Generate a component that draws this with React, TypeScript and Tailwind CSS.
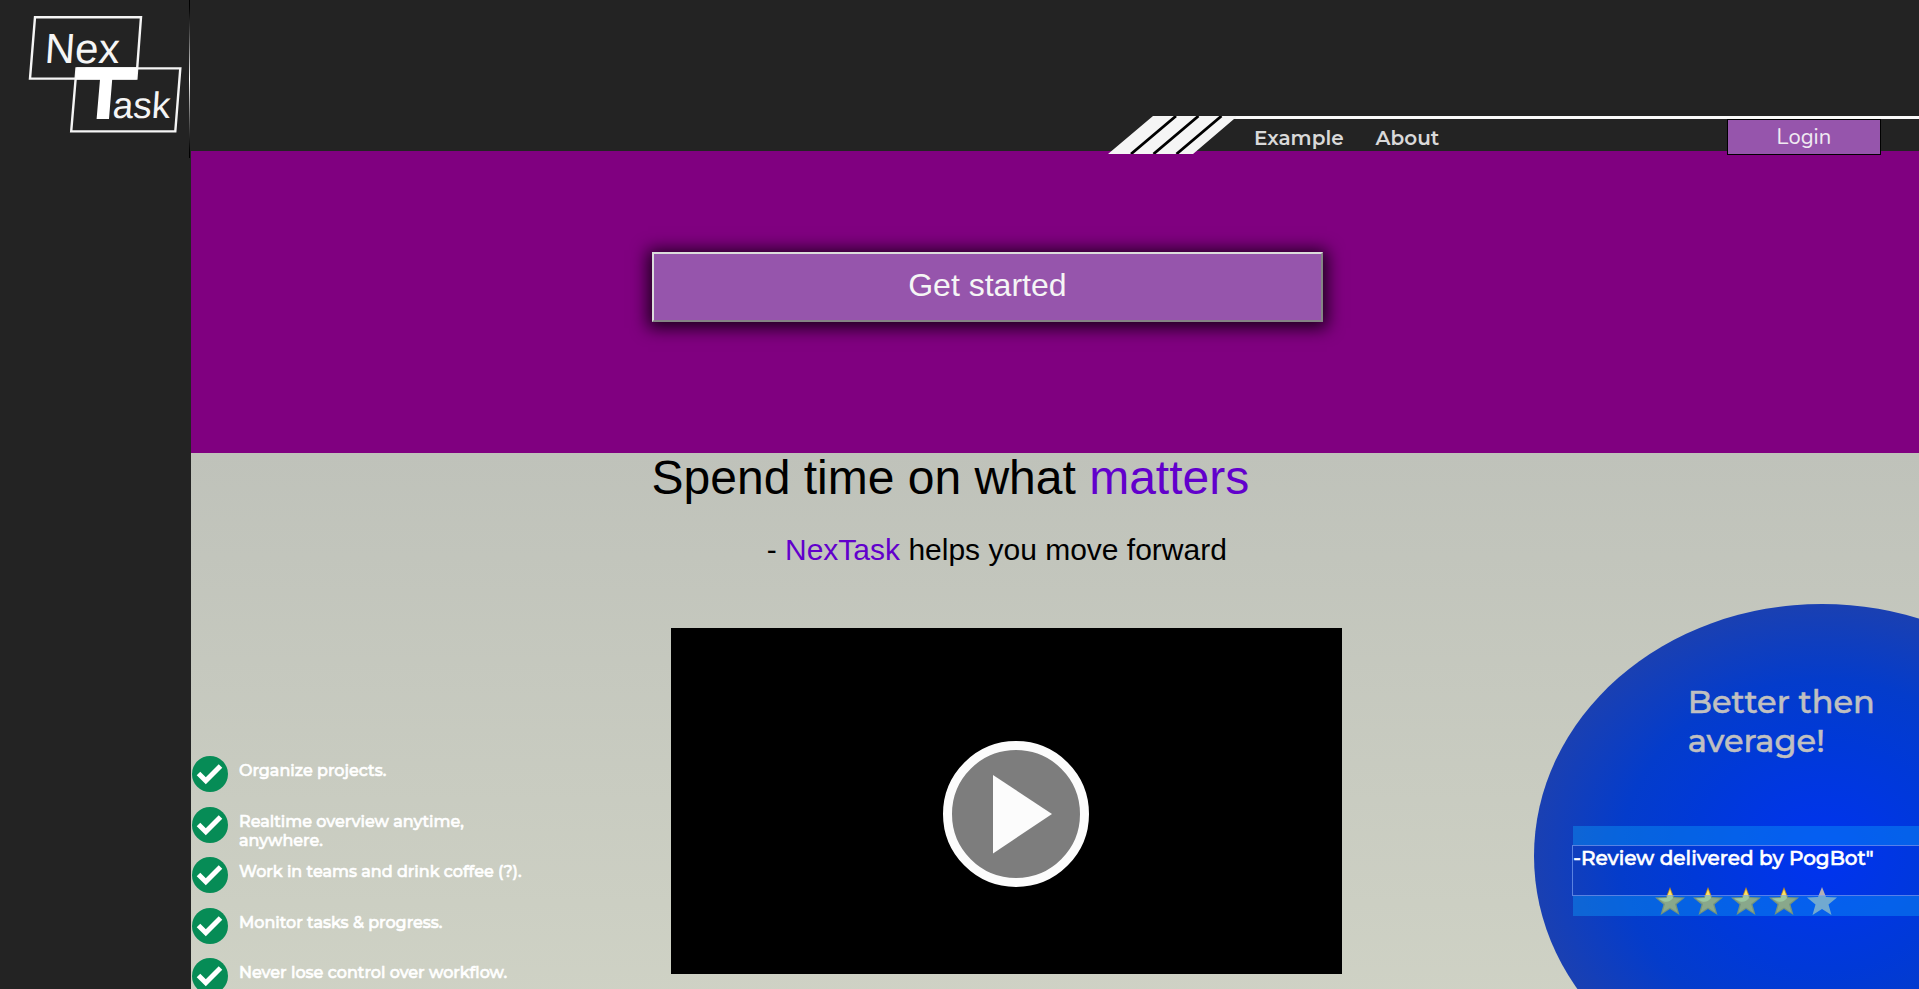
const features = [
  "Organize projects.",
  "Realtime overview anytime, anywhere.",
  "Work in teams and drink coffee (?).",
  "Monitor tasks & progress.",
  "Never lose control over workflow.",
];

const starPoints = "15,0 19,10 30,10.5 21.5,17.5 24.5,28 15,22 5.5,28 8.5,17.5 0,10.5 11,10";

function Logo() {
  return (
    <svg viewBox="0 0 184 136" className="block h-[136px] w-[184px]" role="img" aria-label="NexTask">
      <g fill="none" stroke="#f5f5f5" strokeWidth="2.4">
        <path d="M35 17.2H141L136.4 78.6H30Z" />
        <path d="M76.5 68.4H180.3L175.3 131.4H71.2Z" />
      </g>
      <path d="M76.5 67.2H137.6L136.6 79.4H112.2L109 119H96.6L100 79.4H75.5Z" fill="#fff" />
      <g fill="#f5f5f5" fontFamily="'Liberation Sans', Arial, sans-serif">
        <text transform="translate(44 63) skewX(-4)" fontSize="42">Nex</text>
        <text transform="translate(112 118) skewX(-4)" fontSize="37">ask</text>
      </g>
    </svg>
  );
}

function Stripes() {
  return (
    <svg viewBox="0 0 128 38" className="block h-[38px] w-[128px] shrink-0" aria-hidden="true">
      <path d="M0 38L45 0H128V3H126L85 38Z" fill="#f5f5f5" />
      <path d="M68 0L23 38M90.5 0L45.5 38M113.5 0L68.5 38" stroke="#000" strokeWidth="2.8" />
    </svg>
  );
}

function Check() {
  return (
    <svg viewBox="0 0 36 36" className="block size-9 shrink-0" aria-hidden="true">
      <circle cx="18" cy="18" r="18" fill="#068c56" />
      <path d="M6.5 17.5L13.8 24.8L28.5 10" fill="none" stroke="#fff" strokeWidth="5" />
    </svg>
  );
}

function Star({ filled }: { filled: boolean }) {
  return (
    <svg viewBox="0 0 30 28" className="block h-7 w-[30px]" aria-hidden="true">
      {filled ? (
        <>
          <polygon points={starPoints} fill="#b98d2c" />
          <polygon points="15,2.5 18.3,11 27,11.5 20,17 22.5,25.5 15,20.5 7.5,25.5 10,17 3,11.5 11.7,11" fill="#dcae42" />
          <path d="M15 2.5L18 11Q15 15.5 9 14.5L3 11.5L11.7 11Z" fill="#fbe267" />
        </>
      ) : (
        <polygon points={starPoints} fill="#b4b0b4" />
      )}
    </svg>
  );
}

function Review() {
  return (
    <article className="-mt-6 h-[504px] w-[30vw] rounded-[50%] bg-[radial-gradient(ellipse_closest-side,#0033f0_0%,#0039d8_45%,#043ccb_70%,#1a40b2_100%)] pt-[78px]">
      <h2 className="w-[18vw] pl-[8vw] text-[32px] font-medium leading-[39px] whitespace-nowrap text-[#c0c0c0] [-webkit-text-stroke:0.5px_#c0c0c0]">
        Better then
        <br />
        average!
      </h2>
      <div className="mt-[66px] ml-[38px] grid">
        <div className="col-start-1 row-start-1 flex gap-2 pt-[61px] pl-[83px]">
          {[1, 2, 3, 4, 5].map((n) => (
            <Star key={n} filled={n < 5} />
          ))}
        </div>
        <div className="z-10 col-start-1 row-start-1">
          <div className="ml-px h-[19px] bg-[#0da0fa]/40" />
          <p className="h-[51px] border border-[#7aa0f0]/70 text-[20px] font-medium leading-[24px] whitespace-nowrap text-white [-webkit-text-stroke:0.6px_#fff]">
            -Review delivered by PogBot"
          </p>
          <div className="ml-px h-5 bg-[#0da0fa]/40" />
        </div>
      </div>
    </article>
  );
}

export default function App() {
  return (
    <div className="flex h-screen overflow-x-hidden overflow-y-auto bg-[#232323] font-['Montserrat','Inter',sans-serif] [scrollbar-width:none]">
      <aside className="flex w-[191px] shrink-0 items-start justify-between bg-[#232323]">
        <Logo />
        <div className="mr-px h-[158px] w-px bg-linear-to-b from-black via-white to-black" />
      </aside>
      <div className="min-w-0 flex-1">
        <header className="flex h-[151px] items-end justify-end bg-[#232323]">
          <nav className="z-10 -mb-1 flex h-[39px] w-[811px] items-start">
            <Stripes />
            <div className="flex h-[39px] flex-1 items-start border-t-[3px] border-[#fafafa] pr-[2vw] pl-[18px] text-[20px] font-semibold leading-[38px] text-[#d9d9d9]">
              <a href="#example">Example</a>
              <a href="#about" className="ml-8">About</a>
              <button
                type="button"
                className="ml-auto h-9 w-[8vw] border border-black bg-[#9655ac] font-['Nunito','Open_Sans',sans-serif] text-[22px] font-normal leading-[34px] text-[#f0eaf2]"
              >
                Login
              </button>
            </div>
          </nav>
        </header>
        <section className="flex h-[302px] items-start bg-[#800080] pt-[101px] pl-[24vw]">
          <button
            type="button"
            className="h-[70px] w-[35vw] border-2 border-t-[#dcdcdc] border-r-[#858585] border-b-[#858585] border-l-[#dcdcdc] bg-[#9655ac] pb-1 font-['Liberation_Sans',Arial,sans-serif] text-[32px] text-[#f5f5f5] shadow-[0_2px_16px_4px_rgba(0,0,0,0.8)]"
          >
            Get started
          </button>
        </section>
        <main className="bg-linear-to-b from-[#bfc2ba] to-[#d2d5c7]">
          <div className="font-['Liberation_Sans',Arial,sans-serif] text-black">
            <h1 className="pl-[24vw] text-[48px] leading-[50px]">
              Spend time on what <span className="text-[#6200cc]">matters</span>
            </h1>
            <p className="mt-[29px] pl-[30vw] text-[30px] leading-[36px]">
              - <span className="text-[#6200cc]">NexTask</span> helps you move forward
            </p>
          </div>
          <div className="mt-[60px] grid grid-cols-[25vw_35vw_30vw] items-start">
            <ul className="mt-32 flex h-[238px] flex-col justify-between pl-px">
              {features.map((text) => (
                <li key={text} className="flex h-9 gap-[11px]">
                  <Check />
                  <p className="w-[300px] pt-[5px] text-[16px] font-medium leading-[19px] text-white [-webkit-text-stroke:0.6px_#fff]">
                    {text}
                  </p>
                </li>
              ))}
            </ul>
            <div className="flex h-[346px] items-center justify-center bg-black pt-[26px] pl-[18px]">
              <button type="button" aria-label="Play video">
                <svg viewBox="0 0 146 146" className="block size-[146px]" aria-hidden="true">
                  <circle cx="73" cy="73" r="68.5" fill="#7d7d7d" stroke="#fcfcfc" strokeWidth="9" />
                  <path d="M50 34V112.5L109 73Z" fill="#fcfcfc" />
                </svg>
              </button>
            </div>
            <div className="pl-[10vw]">
              <Review />
            </div>
          </div>
        </main>
      </div>
    </div>
  );
}
